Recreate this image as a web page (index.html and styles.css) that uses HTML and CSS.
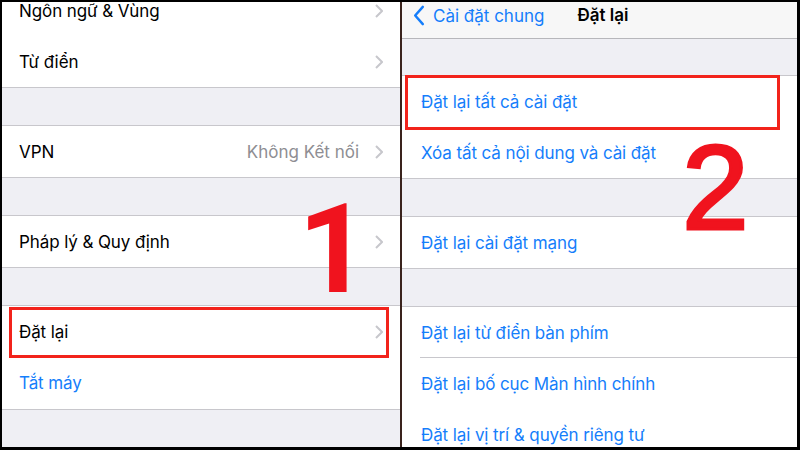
FILE: index.html
```html
<!DOCTYPE html>
<html lang="vi">
<head>
<meta charset="utf-8">
<title>Đặt lại</title>
<link rel="stylesheet" href="styles.css">
</head>
<body>
<div class="frame">
  <section class="panel left">
    <div class="content">
      <div class="group first">
        <div class="row"><span class="label">Ngôn ngữ &amp; Vùng</span><svg class="chev" viewBox="0 0 8 14"><path d="M1 1l6 6-6 6"/></svg></div>
        <div class="row"><span class="label">Từ điển</span><svg class="chev" viewBox="0 0 8 14"><path d="M1 1l6 6-6 6"/></svg></div>
      </div>
      <div class="spacer"></div>
      <div class="group">
        <div class="row"><span class="label">VPN</span><span class="value">Không Kết nối</span><svg class="chev" viewBox="0 0 8 14"><path d="M1 1l6 6-6 6"/></svg></div>
      </div>
      <div class="spacer"></div>
      <div class="group">
        <div class="row"><span class="label">Pháp lý &amp; Quy định</span><svg class="chev" viewBox="0 0 8 14"><path d="M1 1l6 6-6 6"/></svg></div>
      </div>
      <div class="spacer"></div>
      <div class="group">
        <div class="row marked"><span class="label">Đặt lại</span><svg class="chev" viewBox="0 0 8 14"><path d="M1 1l6 6-6 6"/></svg><span class="box box-left"></span></div>
        <div class="row tall"><span class="label blue">Tắt máy</span></div>
      </div>
    </div>
    <span class="step step-1">1</span>
  </section>
  <div class="divider"></div>
  <section class="panel right">
    <header class="nav">
      <span class="back"><svg class="back-chev" viewBox="0 0 12 22"><path d="M10 2L2 11l8 9"/></svg>Cài đặt chung</span>
      <span class="title">Đặt lại</span>
    </header>
    <div class="spacer top"></div>
    <div class="group">
      <div class="row marked"><span class="label blue">Đặt lại tất cả cài đặt</span><span class="box box-right"></span></div>
      <div class="row"><span class="label blue">Xóa tất cả nội dung và cài đặt</span></div>
    </div>
    <div class="spacer"></div>
    <div class="group">
      <div class="row"><span class="label blue">Đặt lại cài đặt mạng</span></div>
    </div>
    <div class="spacer"></div>
    <div class="group open">
      <div class="row sep"><span class="label blue">Đặt lại từ điển bàn phím</span></div>
      <div class="row"><span class="label blue">Đặt lại bố cục Màn hình chính</span></div>
      <div class="row"><span class="label blue">Đặt lại vị trí &amp; quyền riêng tư</span></div>
    </div>
    <span class="step step-2">2</span>
  </section>
</div>
</body>
</html>
```
FILE: styles.css
```css
* { box-sizing: border-box; }
html, body { margin: 0; padding: 0; }
body {
  width: 800px;
  height: 450px;
  overflow: hidden;
  background: #000;
  font-family: Inter, "Liberation Sans", sans-serif;
}
.frame {
  display: flex;
  height: 450px;
  padding: 2px 3px 3px 2px;
}
.panel {
  position: relative;
  overflow: hidden;
  background: #efeff4;
  height: 445px;
}
.left { width: 398px; }
.right { width: 395px; }
.divider { width: 2px; background: #3a231d; }

.content { margin-top: -17px; }
.group {
  background: #fff;
  border-top: 1px solid #c8c7cc;
  border-bottom: 1px solid #c8c7cc;
}
.group.first { border-top: none; }
.group.open { border-bottom: none; }
.spacer { height: 37px; }
.right .spacer.top { height: 36px; }

.row {
  position: relative;
  display: flex;
  align-items: center;
  height: 51px;
  padding: 0 17px 0 17px;
  font-size: 17px;
  color: #000;
}
.row.tall { height: 52px; }
.label { flex: 1; letter-spacing: -0.1px; }
.blue { color: #157efb; }
.value { color: #8e8e93; margin-right: 16px; }
.chev {
  width: 8px;
  height: 14px;
  fill: none;
  stroke: #c7c7cc;
  stroke-width: 2;
}
.right .row { padding-left: 19px; }
.right .row.sep::after {
  content: "";
  position: absolute;
  left: 18px;
  right: 0;
  bottom: 0;
  border-bottom: 1px solid #c8c7cc;
}

.nav {
  display: flex;
  align-items: flex-start;
  height: 37px;
  background: #f7f7f7;
  border-bottom: 1px solid #b7b7bb;
  padding: 3px 0 0 11px;
  font-size: 17px;
  line-height: 20px;
}
.back {
  display: flex;
  align-items: center;
  color: #157efb;
}
.back-chev {
  width: 12px;
  height: 21px;
  margin-right: 8px;
  fill: none;
  stroke: #157efb;
  stroke-width: 2.6;
  stroke-linecap: round;
  stroke-linejoin: round;
}
.title {
  margin-left: 33px;
  font-weight: 600;
  color: #000;
}

.box {
  position: absolute;
  border: 3px solid #f2231b;
}
.box-left { left: 7px; right: 11px; top: 1px; bottom: -1px; }
.box-right { left: 3px; right: 17px; top: -1px; bottom: -3px; }

.step {
  position: absolute;
  color: #f0131e;
  font-family: "Liberation Sans", Arial, sans-serif;
  line-height: 1;
}
.step-1 { left: 296px; top: 186px; font-size: 124px; font-family: Roboto, sans-serif; font-weight: 700; }
.step-2 { left: 280px; top: 125px; font-size: 120px; -webkit-text-stroke: 3px #f0131e; }
```
